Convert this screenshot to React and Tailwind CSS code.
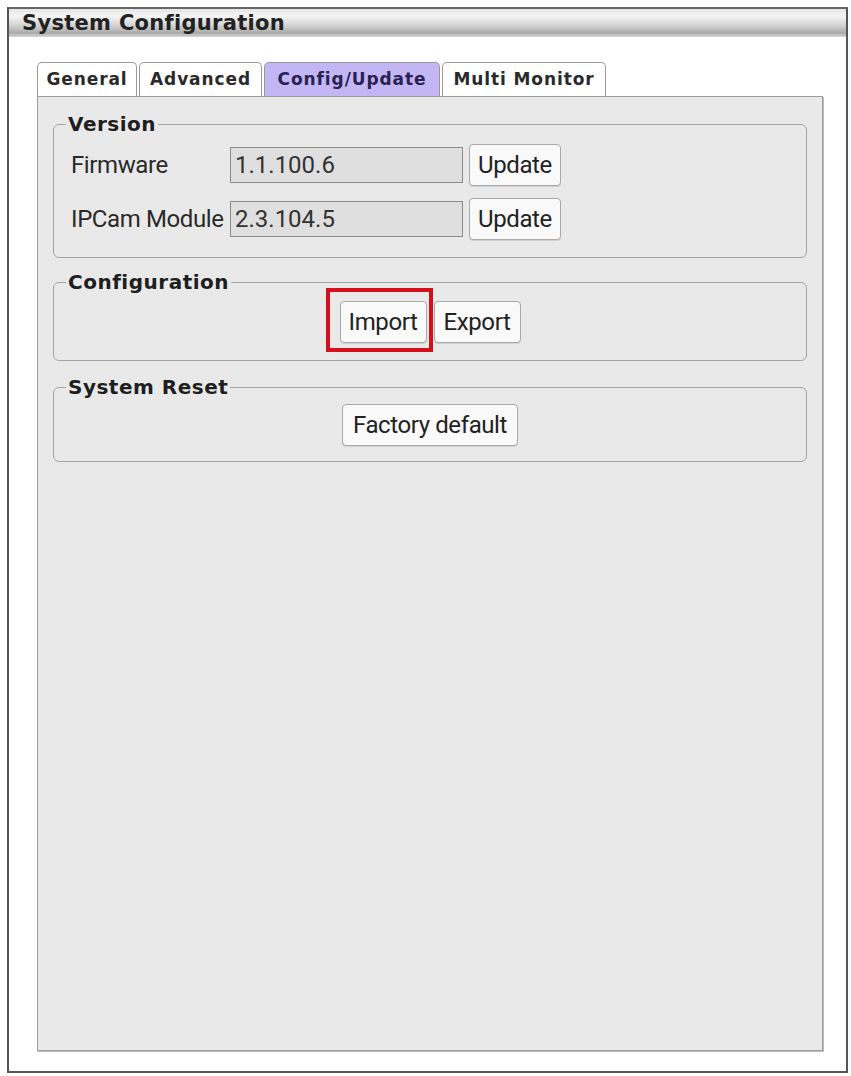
import { useState } from "react";

const TABS = [
  { label: "General", w: "w-[100px]" },
  { label: "Advanced", w: "w-[123px]" },
  { label: "Config/Update", w: "w-[176px]" },
  { label: "Multi Monitor", w: "w-[164px]" },
];

const VERSIONS = [
  { label: "Firmware", value: "1.1.100.6" },
  { label: "IPCam Module", value: "2.3.104.5" },
];

function Btn({ children, className = "" }) {
  return (
    <button
      className={`h-[42px] bg-[#f9f9f9] border border-[#a9a9a9] rounded-[4px] text-[24px] leading-none text-[#222] font-['Roboto',sans-serif] tracking-[-0.4px] shadow-[0_1px_0_#d0d0d0] ${className}`}
    >
      {children}
    </button>
  );
}

function Group({ title, children, className = "" }) {
  return (
    <fieldset className={`border border-[#a3a3a3] rounded-[6px] px-[16px] ${className}`}>
      <legend className="ml-[-4px] px-[2px] text-[20px] font-bold text-[#1e1e1e] font-['DejaVu_Sans',sans-serif] tracking-[0.5px] leading-[22px]">
        {title}
      </legend>
      {children}
    </fieldset>
  );
}

export default function App() {
  const [tab, setTab] = useState(2);

  return (
    <div className="w-[851px] h-[1076px] bg-white pt-[7px] pl-[7px]">
      <div className="w-[841px] h-[1066px] border-2 border-[#555] border-t-[#666] flex flex-col">
        <div className="h-[28px] flex items-end bg-[linear-gradient(to_bottom,#e6e6e6_0%,#f5f5f5_25%,#dcdcdc_50%,#c4c4c4_70%,#a9a9a9_85%,#d6d6d6_100%)]">
          <span className="ml-[13px] mb-[1px] text-[21px] font-bold leading-[26px] text-[#222] font-['DejaVu_Sans',sans-serif] tracking-[0.3px]">
            System Configuration
          </span>
        </div>

        <div className="flex-1 px-[28px] pt-[25px] pb-[20px] flex flex-col">
          <div className="flex items-end gap-[2px]">
            {TABS.map((t, i) => (
              <button
                key={t.label}
                onClick={() => setTab(i)}
                className={
                  "h-[34px] border border-b-0 border-[#9a9a9a] rounded-t-[5px] text-[17px] font-bold tracking-[0.9px] font-['DejaVu_Sans',sans-serif] " +
                  t.w +
                  " " +
                  (i === tab ? "bg-[#c2b6f4] text-[#2a2250]" : "bg-white text-[#2a2a2a]")
                }
              >
                {t.label}
              </button>
            ))}
          </div>

          <div className="flex-1 bg-[#e9e9e9] border border-[#9c9c9c] shadow-[1px_1px_0_#bdbdbd] w-[786px] px-[15px] pt-[16px] flex flex-col gap-[13px]">
            <Group title="Version" className="pb-[17px]">
              <div className="flex flex-col gap-[12px] pt-[9px]">
                {VERSIONS.map((v) => (
                  <div key={v.label} className="flex items-center">
                    <span className="w-[160px] pl-[1px] text-[24px] text-[#2a2a2a] font-['Roboto',sans-serif] tracking-[-0.4px]">
                      {v.label}
                    </span>
                    <div className="w-[233px] h-[36px] bg-[#dfdfdf] border border-[#8c8c8c] flex items-center pl-[4px] text-[24px] text-[#333] font-['Roboto',sans-serif] tracking-[0px]">
                      {v.value}
                    </div>
                    <Btn className="ml-[6px] w-[92px]">Update</Btn>
                  </div>
                ))}
              </div>
            </Group>

            <Group title="Configuration" className="pb-[17px]">
              <div className="flex justify-center pt-[8px]">
                <div className="relative flex">
                  <Btn className="w-[87px]">Import</Btn>
                  <Btn className="w-[87px] ml-[7px]">Export</Btn>
                  <div className="absolute left-[-14px] top-[-13px] w-[107px] h-[64px] border-[4px] border-[#d4101a] pointer-events-none" />
                </div>
              </div>
            </Group>

            <Group title="System Reset" className="pb-[15px] mt-[2px]">
              <div className="flex justify-center pt-[6px]">
                <Btn className="w-[176px]">Factory default</Btn>
              </div>
            </Group>
          </div>
        </div>
      </div>
    </div>
  );
}
